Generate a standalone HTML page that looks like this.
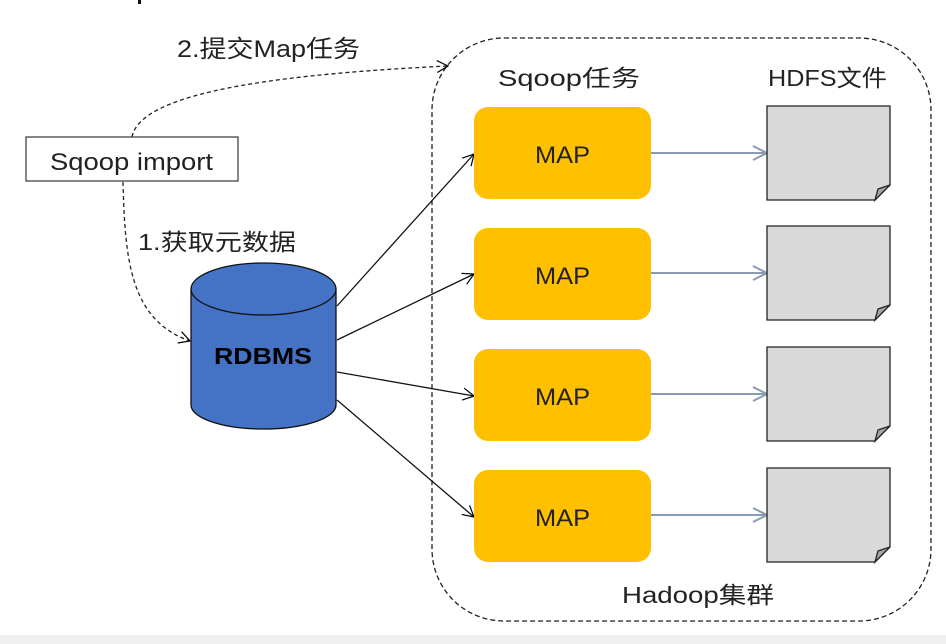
<!DOCTYPE html>
<html><head><meta charset="utf-8"><style>
html,body{margin:0;padding:0;background:#fff;width:946px;height:644px;overflow:hidden}
svg text{font-family:"Liberation Sans","Noto Sans CJK SC",sans-serif;fill:#222}
</style></head><body>
<svg width="946" height="644" viewBox="0 0 946 644" xmlns="http://www.w3.org/2000/svg">
<defs>
<marker id="ah" markerWidth="14" markerHeight="14" refX="12" refY="7" orient="auto" markerUnits="userSpaceOnUse"><path d="M1,1 L12,7 L1,13" fill="none" stroke="#000" stroke-width="1.2"/></marker>
<marker id="gh" markerWidth="18" markerHeight="18" refX="16" refY="9" orient="auto" markerUnits="userSpaceOnUse"><path d="M2,2 L16,9 L2,16" fill="none" stroke="#8a9bb4" stroke-width="2"/></marker>
</defs>
<rect x="138" y="0" width="3" height="4" fill="#111"/>
<rect x="432" y="38" width="499" height="583" rx="72" ry="72" fill="none" stroke="#222" stroke-width="1.3" stroke-dasharray="5,3"/>
<text x="177" y="57" font-size="24" textLength="183" lengthAdjust="spacingAndGlyphs">2.提交Map任务</text>
<text x="498" y="86" font-size="23" textLength="142" lengthAdjust="spacingAndGlyphs">Sqoop任务</text>
<text x="768" y="86" font-size="23" textLength="119" lengthAdjust="spacingAndGlyphs">HDFS文件</text>
<text x="622" y="603" font-size="23" textLength="152" lengthAdjust="spacingAndGlyphs">Hadoop集群</text>
<text x="138" y="250" font-size="23" textLength="158" lengthAdjust="spacingAndGlyphs">1.获取元数据</text>
<path d="M132,137 C140,95 260,75 448,66" fill="none" stroke="#222" stroke-width="1.3" stroke-dasharray="4,3" marker-end="url(#ah)"/>
<path d="M123,182 C125,260 130,320 190,341" fill="none" stroke="#222" stroke-width="1.3" stroke-dasharray="4,3" marker-end="url(#ah)"/>
<rect x="26" y="137" width="212" height="44" fill="#fff" stroke="#444" stroke-width="1.3"/>
<text x="50" y="170" font-size="24" textLength="163" lengthAdjust="spacingAndGlyphs">Sqoop import</text>
<path d="M191,289 L191,405 A72.5,24 0 0 0 336,405 L336,289" fill="#4472c4" stroke="#111" stroke-width="1.3"/>
<ellipse cx="263.5" cy="289" rx="72.5" ry="26" fill="#4472c4" stroke="#111" stroke-width="1.3"/>
<text x="214" y="364" font-size="23" font-weight="bold" textLength="98" lengthAdjust="spacingAndGlyphs" style="fill:#000">RDBMS</text>
<g stroke="#111" stroke-width="1.3" fill="none" marker-end="url(#ah)">
<path d="M337,306 L474,154"/>
<path d="M337,340 L474,274"/>
<path d="M337,372 L474,396"/>
<path d="M337,400 L474,517"/>
</g>
<g fill="#ffc000">
<rect x="474" y="107" width="177" height="92" rx="14"/>
<rect x="474" y="228" width="177" height="92" rx="14"/>
<rect x="474" y="349" width="177" height="92" rx="14"/>
<rect x="474" y="470" width="177" height="92" rx="14"/>
</g>
<g font-size="24">
<text x="535" y="163" textLength="55" lengthAdjust="spacingAndGlyphs">MAP</text><text x="535" y="284" textLength="55" lengthAdjust="spacingAndGlyphs">MAP</text><text x="535" y="405" textLength="55" lengthAdjust="spacingAndGlyphs">MAP</text><text x="535" y="526" textLength="55" lengthAdjust="spacingAndGlyphs">MAP</text>
</g>
<g stroke="#8a9bb4" stroke-width="2" marker-end="url(#gh)">
<path d="M651,153 L767,153"/><path d="M651,273 L767,273"/><path d="M651,394 L767,394"/><path d="M651,515 L767,515"/>
</g>
<g stroke="#222" stroke-width="1.3">
<g transform="translate(767,106)"><path d="M0,0 H123 V79 L108,94 H0 Z" fill="#d9d9d9"/><path d="M108,94 L111,83 L123,79 Z" fill="#a6a6a6"/></g>
<g transform="translate(767,226)"><path d="M0,0 H123 V79 L108,94 H0 Z" fill="#d9d9d9"/><path d="M108,94 L111,83 L123,79 Z" fill="#a6a6a6"/></g>
<g transform="translate(767,347)"><path d="M0,0 H123 V79 L108,94 H0 Z" fill="#d9d9d9"/><path d="M108,94 L111,83 L123,79 Z" fill="#a6a6a6"/></g>
<g transform="translate(767,468)"><path d="M0,0 H123 V79 L108,94 H0 Z" fill="#d9d9d9"/><path d="M108,94 L111,83 L123,79 Z" fill="#a6a6a6"/></g>
</g>
<rect x="0" y="635" width="946" height="9" fill="#f0f0f0"/>
</svg>
</body></html>
